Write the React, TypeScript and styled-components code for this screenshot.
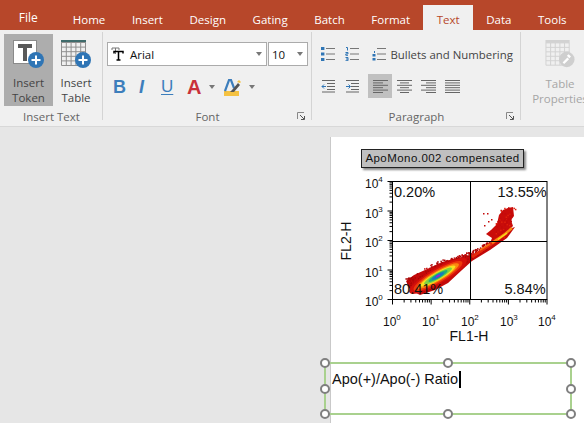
import React, { useMemo } from 'react';
import styled, { createGlobalStyle } from 'styled-components';

const GlobalStyle = createGlobalStyle`
  html, body {
    margin: 0;
    padding: 0;
    width: 584px;
    height: 423px;
    overflow: hidden;
    background: #e6e6e6;
  }
`;

const Window = styled.div`
  width: 584px;
  height: 423px;
  display: flex;
  flex-direction: column;
  overflow: hidden;
  font-family: 'Open Sans', 'Noto Sans', sans-serif;
`;

const TabBar = styled.div`
  height: 30px;
  flex: none;
  display: flex;
  align-items: flex-end;
  background: #b7472a;
`;

const FileTab = styled.div`
  flex: none;
  width: 59.5px;
  height: 25px;
  padding-right: 3px;
  box-sizing: border-box;
  text-align: center;
  line-height: 26px;
  font-size: 12px;
  color: #fff;
`;

const Tab = styled.div<{ $active?: boolean }>`
  flex: none;
  height: 25px;
  padding: 0 13.3px;
  line-height: 30px;
  font-size: 11.5px;
  white-space: nowrap;
  color: ${(p) => (p.$active ? '#b7472a' : '#fff')};
  background: ${(p) => (p.$active ? '#f0f0f0' : 'transparent')};
`;

const Ribbon = styled.div`
  height: 96px;
  flex: none;
  display: flex;
  background: #f0f0f0;
  border-bottom: 1px solid #d8d8d8;
`;

const Group = styled.div<{ $width: number; $last?: boolean }>`
  position: relative;
  flex: none;
  width: ${(p) => p.$width}px;
  height: 92px;
  margin-top: 2px;
  box-sizing: border-box;
  display: flex;
  flex-direction: column;
  &::after {
    content: '';
    display: ${(p) => (p.$last ? 'none' : 'block')};
    position: absolute;
    right: 0;
    top: 0;
    width: 1px;
    height: 88px;
    background: #d4d4d4;
  }
`;

const GroupBody = styled.div`
  flex: 1;
  min-height: 0;
`;

const GroupLabel = styled.div`
  height: 15px;
  line-height: 15px;
  text-align: center;
  font-size: 11.5px;
  color: #666;
`;

const Launcher = styled.svg`
  position: absolute;
  right: 7px;
  bottom: 4px;
  width: 8px;
  height: 8px;
`;

const BigButtons = styled.div`
  display: flex;
  padding: 2px 0 0 4px;
`;

const BigButton = styled.div<{ $active?: boolean; $width: number; $disabled?: boolean }>`
  width: ${(p) => p.$width}px;
  height: 72px;
  flex: none;
  display: flex;
  flex-direction: column;
  align-items: center;
  background: ${(p) => (p.$active ? '#adadad' : 'transparent')};
  color: ${(p) => (p.$disabled ? '#a6a6a6' : '#444')};
  svg {
    display: block;
    margin: 6px 0 5px;
  }
`;

const BigLabel = styled.div`
  font-size: 11.5px;
  line-height: 15px;
  text-align: center;
  white-space: nowrap;
`;

const FontRows = styled.div`
  padding: 10px 0 0 4px;
`;

const Combos = styled.div`
  display: flex;
  gap: 1px;
`;

const Combo = styled.div<{ $width: number }>`
  width: ${(p) => p.$width}px;
  height: 24px;
  box-sizing: border-box;
  display: flex;
  align-items: center;
  padding: 0 4px 0 3px;
  gap: 6px;
  background: #fff;
  border: 1px solid #ababab;
  font-size: 11.5px;
  color: #111;
`;

const ComboText = styled.span`
  flex: 1;
`;

const Caret = styled.span`
  flex: none;
  width: 0;
  height: 0;
  border-left: 3.5px solid transparent;
  border-right: 3.5px solid transparent;
  border-top: 4px solid #777;
`;

const FormatRow = styled.div`
  display: flex;
  align-items: center;
  height: 20px;
  margin-top: 11px;
  padding-left: 6px;
`;

const FormatLetter = styled.span<{ $color: string; $width: number; $italic?: boolean; $underline?: boolean; $size?: number }>`
  width: ${(p) => p.$width}px;
  flex: none;
  font-family: 'Liberation Sans', Arial, sans-serif;
  font-size: ${(p) => p.$size ?? 18}px;
  line-height: 20px;
  color: ${(p) => p.$color};
  font-style: ${(p) => (p.$italic ? 'italic' : 'normal')};
  text-decoration: ${(p) => (p.$underline ? 'underline' : 'none')};
  text-underline-offset: 2px;
  text-decoration-thickness: 1px;
  font-weight: ${(p) => (p.$underline ? 400 : 700)};
`;

const Spacer = styled.span<{ $width: number }>`
  flex: none;
  width: ${(p) => p.$width}px;
`;

const ParaRows = styled.div`
  display: flex;
  flex-direction: column;
  gap: 8px;
  padding: 10px 0 0 4px;
`;

const ParaRow = styled.div`
  display: flex;
  align-items: center;
  height: 24px;
`;

const ParaIcon = styled.div<{ $active?: boolean; $shift?: number }>`
  width: 24px;
  height: 24px;
  flex: none;
  margin-left: ${(p) => p.$shift ?? 0}px;
  display: flex;
  align-items: center;
  justify-content: center;
  background: ${(p) => (p.$active ? '#c0c0c0' : 'transparent')};
`;

const BulletsText = styled.span`
  font-size: 11.4px;
  color: #444;
  white-space: nowrap;
`;

const Workspace = styled.div`
  flex: 1;
  min-height: 0;
  display: flex;
  padding: 10px 0 0 330px;
  background: #e6e6e6;
`;

const Page = styled.div`
  width: 254px;
  box-sizing: border-box;
  border-left: 1px solid #c9c9c9;
  background: #fff;
  display: flex;
  flex-direction: column;
`;

const PlotTitle = styled.div`
  align-self: flex-start;
  margin: 12px 0 0 30px;
  width: 163px;
  height: 19px;
  box-sizing: border-box;
  text-align: center;
  line-height: 17px;
  background: #c0c0c0;
  border: 1px solid #222;
  box-shadow: 2px 2px 2px #8a8a8a;
  font-family: 'Liberation Sans', Arial, sans-serif;
  font-size: 11.5px;
  letter-spacing: 0.45px;
  color: #111;
  white-space: nowrap;
`;

const ChartSvg = styled.svg`
  display: block;
  flex: none;
  margin-top: 4px;
`;

const TextBox = styled.div`
  position: relative;
  flex: none;
  width: 248px;
  height: 53px;
  margin: 15px 0 0 -7px;
  box-sizing: border-box;
  border: 2px solid #a9d18e;
  padding: 7px 0 0 6px;
  font-family: 'Liberation Sans', Arial, sans-serif;
  font-size: 14.5px;
  line-height: 17px;
  color: #111;
  white-space: nowrap;
`;

const TextCaret = styled.span`
  display: inline-block;
  width: 2px;
  height: 17px;
  margin-left: 1px;
  background: #000;
  vertical-align: top;
`;

const Handle = styled.span<{ $x: number; $y: number }>`
  position: absolute;
  left: calc(${(p) => p.$x}% + ${(p) => p.$x / 50 - 1}px);
  top: calc(${(p) => p.$y}% + ${(p) => p.$y / 50 - 1}px);
  width: 10px;
  height: 10px;
  margin: -5px 0 0 -5px;
  box-sizing: border-box;
  border: 2px solid #7f7f7f;
  border-radius: 50%;
  background: #fff;
`;

const BLUE = '#3d7ebc';

const PlusBadge = ({ cx, cy }: { cx: number; cy: number }) => (
  <g>
    <circle cx={cx} cy={cy} r={8} fill="#2f75b5" />
    <path d={`M${cx - 4.5} ${cy}h9M${cx} ${cy - 4.5}v9`} stroke="#fff" strokeWidth={2} />
  </g>
);

const TokenIcon = () => (
  <svg width="32" height="30" viewBox="0 0 32 30">
    <rect x="0.5" y="0.5" width="23" height="23" fill="#fff" stroke="#8a8a8a" />
    <path d="M5 4h14v4h-5v13h-4V8H5z" fill="#595959" />
    <PlusBadge cx={23} cy={20} />
  </svg>
);

const gridLines = (x0: number, y0: number, w: number, h: number, cols: number, rows: number) => {
  let d = '';
  for (let i = 0; i <= cols; i += 1) d += `M${x0 + (i * w) / cols} ${y0}v${h}`;
  for (let i = 0; i <= rows; i += 1) d += `M${x0} ${y0 + (i * h) / rows}h${w}`;
  return d;
};

const TableIcon = () => (
  <svg width="32" height="30" viewBox="0 0 32 30">
    <rect x="1" y="0" width="25" height="2.5" fill="#3f6b6b" />
    <path d={gridLines(1.5, 2.5, 24, 23, 5, 5)} stroke="#8f8f8f" fill="none" />
    <PlusBadge cx={23} cy={20} />
  </svg>
);

const TablePropsIcon = () => (
  <svg width="32" height="32" viewBox="0 0 32 32">
    <rect x="1" y="0" width="25" height="3" fill="#d2d2d2" />
    <path d={gridLines(1.5, 3, 24, 23, 5, 5)} stroke="#d2d2d2" fill="none" />
    <circle cx="23" cy="20" r="8" fill="#cfcfcf" />
    <path d="M19.5 24l5-5M24 15.5l2.5 2.5" stroke="#fff" strokeWidth={2.4} />
  </svg>
);

const FontGlyph = () => (
  <svg width="13" height="14" viewBox="0 0 13 14">
    <path d="M1 3V1h7v2M4.5 1v6" stroke="#777" fill="none" />
    <path d="M3 6.5V4.6h9v1.9M7.5 4.5v8.5M5.5 13h4" stroke="#000" strokeWidth={1.5} fill="none" />
  </svg>
);

const HighlightGlyph = () => (
  <svg width="17" height="19" viewBox="0 0 17 19">
    <rect x="0" y="13" width="15" height="5" fill="#f5c242" />
    <path d="M1 13L5 2h2l3 8" stroke={BLUE} strokeWidth={2.2} fill="none" />
    <path d="M6 14l2-2 6-7 2 2-6 7z" fill="#555" />
    <path d="M13 4l2-2 2 2-1 1z" fill="#f5c242" />
  </svg>
);

const AlignIcon = ({ rows }: { rows: [number, number][] }) => (
  <svg width="15" height="15" viewBox="0 0 15 15">
    {rows.map(([x, w], i) => (
      <path key={i} d={`M${x} ${1.5 + i * 2.4}h${w}`} stroke="#666" strokeWidth={1} />
    ))}
  </svg>
);

const IndentIcon = ({ flip }: { flip?: boolean }) => (
  <svg width="15" height="14" viewBox="0 0 15 14">
    <path d="M1 1.5h13M6 4.5h8M6 7.5h8M6 10.5h8M1 13h13" stroke="#666" />
    {flip ? (
      <path d="M1 7.5h4M3.5 5.5l2 2-2 2" stroke="#2f75b5" fill="none" />
    ) : (
      <path d="M5 7.5H1M3 5.5l-2 2 2 2" stroke="#2f75b5" fill="none" />
    )}
  </svg>
);

const ListIcon = ({ kind }: { kind: 'dots' | 'nums' | 'mixed' }) => (
  <svg width="14" height="14" viewBox="0 0 14 14">
    <path d="M5 1.5h9M5 7h9M5 12.5h9" stroke="#777" />
    {kind === 'dots' &&
      [0, 5.5, 11].map((y) => <rect key={y} x="0" y={y} width="3.4" height="3" fill="#2f75b5" />)}
    {kind === 'nums' && <path d="M1 .5h1.5v3M.5 5.5h2.5v1.4H.8v1.4H3M.5 10.5H3v3.2H.5M1 12h2" stroke="#2f75b5" fill="none" />}
    {kind === 'mixed' && (
      <>
        <path d="M2.5 4v2" stroke="#2f75b5" />
        <rect x="0.5" y="7" width="3" height="2.5" fill="#2f75b5" />
        <rect x="0.5" y="11" width="3" height="2.5" fill="#2f75b5" />
      </>
    )}
  </svg>
);

const LauncherIcon = () => (
  <Launcher viewBox="0 0 8 8">
    <path d="M.5 7V.5H7" stroke="#888" fill="none" />
    <path d="M3 3l4 4M7.5 4v3.5H4" stroke="#555" fill="none" />
  </Launcher>
);

/* chart geometry, in window pixels */
const X0 = 392.5;
const X1 = 547;
const Y0 = 299.5;
const Y1 = 181.5;
const DX = (X1 - X0) / 4;
const DY = (Y0 - Y1) / 4;
const MINOR = [2, 3, 4, 5, 6, 7, 8, 9].map((n) => Math.log10(n));

const BAND: [number, number, number][] = [
  [406, 281, 3],
  [420, 283, 9],
  [440, 271, 10],
  [458, 261, 5],
  [472, 254, 3],
  [490, 243, 2],
];

const OUTLIERS = [
  [483, 213],
  [487, 213],
  [484, 225],
  [488, 221],
  [491, 219],
];

const useSpeckle = () =>
  useMemo(() => {
    let seed = 4711;
    const rnd = () => {
      seed = (seed * 16807) % 2147483647;
      return seed / 2147483647;
    };
    const dots: { x: number; y: number; c: string }[] = [];
    for (let i = 0; i < 420; i += 1) {
      const t = rnd() * (BAND.length - 1);
      const k = Math.floor(t);
      const f = t - k;
      const a = BAND[k];
      const b = BAND[k + 1];
      const off = (rnd() * 2 - 1) * (a[2] + (b[2] - a[2]) * f) * 1.15;
      dots.push({
        x: a[0] + (b[0] - a[0]) * f + off * 0.5,
        y: a[1] + (b[1] - a[1]) * f + off * 0.87,
        c: rnd() > 0.5 ? '#c40a0a' : '#a80606',
      });
    }
    for (let i = 0; i < 70; i += 1) {
      const y = 207 + rnd() * 32;
      dots.push({
        x: 489 + (240 - y) * 0.36 + rnd() * 15,
        y,
        c: rnd() > 0.5 ? '#c40a0a' : '#e0200c',
      });
    }
    OUTLIERS.forEach(([x, y]) => dots.push({ x, y, c: '#c40a0a' }));
    return dots;
  }, []);

const ellipses: [number, number, string][] = [
  [33, 8, '#d40f0a'],
  [28, 6.4, '#ee3a0c'],
  [24, 5, '#fb8a10'],
  [20, 4, '#f6e21e'],
  [16, 3.2, '#7fd040'],
  [11, 2.4, '#1fae78'],
  [7, 1.7, '#1878c0'],
  [2.5, 1, '#9a20d0'],
];

const Sup = ({ x, y, n }: { x: number; y: number; n: number }) => (
  <text x={x} y={y} fontSize={12}>
    10
    <tspan dy={-6} fontSize={8}>
      {n}
    </tspan>
  </text>
);

const Chart = () => {
  const dots = useSpeckle();
  let ticks = '';
  for (let d = 0; d <= 4; d += 1) {
    ticks += `M${X0 + d * DX} ${Y0}v5M${X0 - 5} ${Y0 - d * DY}h5`;
    if (d < 4) {
      MINOR.forEach((m) => {
        ticks += `M${X0 + (d + m) * DX} ${Y0}v3M${X0 - 3} ${Y0 - (d + m) * DY}h3`;
      });
    }
  }
  return (
    <ChartSvg
      width={253}
      height={175}
      viewBox="331 172 253 175"
      fontFamily="'Liberation Sans', Arial, sans-serif"
      fill="#111"
    >
      <path
        d="M406 281L414 275L425 270L442 262L457 258L472 255L488 245L500 238L512 228L515 227L507 238L490 250L472 261L462 270L448 283L435 290L420 295L410 290Z"
        fill="#c40a0a"
      />
      <path
        d="M503 210L508 208L513 207L514 216L511 220L513 226L503 236L497 241L490 243L492 238L486 234L491 230L497 224L499 215Z"
        fill="#c90c0a"
      />
      {dots.map((d, i) => (
        <rect key={i} x={d.x} y={d.y} width={1.5} height={1.5} fill={d.c} />
      ))}
      <path d="M472 257L490 245L507 233" stroke="#e4280c" strokeWidth={3} fill="none" />
      <path d="M492 243L505 234L512 228" stroke="#fa8a10" strokeWidth={2.4} fill="none" />
      <path d="M498 239.5L507 233" stroke="#f6e21e" strokeWidth={1.3} fill="none" />
      <path d="M480 250L490 244" stroke="#f86c10" strokeWidth={1.6} fill="none" />
      <g transform="rotate(-30 438 276)">
        {ellipses.map(([rx, ry, c]) => (
          <ellipse key={c} cx={438} cy={276} rx={rx} ry={ry} fill={c} />
        ))}
      </g>
      <rect x={X0} y={Y1} width={X1 - X0} height={Y0 - Y1} fill="none" stroke="#000" />
      <path d={`M470.5 ${Y1}V${Y0}M${X0} 241.5H${X1}`} stroke="#000" fill="none" />
      <path d={ticks} stroke="#000" fill="none" />
      <g fontSize={14.5}>
        <text x={394} y={197}>0.20%</text>
        <text x={497.5} y={197}>13.55%</text>
        <text x={394} y={294}>80.41%</text>
        <text x={504.5} y={294}>5.84%</text>
      </g>
      {[0, 1, 2, 3].map((n) => (
        <Sup key={n} x={383 + n * 39} y={326} n={n} />
      ))}
      <Sup x={538} y={326} n={4} />
      {[
        [4, 188],
        [3, 218],
        [2, 247],
        [1, 277],
        [0, 306],
      ].map(([n, y]) => (
        <Sup key={n} x={365} y={y} n={n} />
      ))}
      <text x={469} y={341} fontSize={14} textAnchor="middle">FL1-H</text>
      <text x={0} y={0} fontSize={14} textAnchor="middle" transform="translate(351 241) rotate(-90)">FL2-H</text>
    </ChartSvg>
  );
};

const HANDLES: [number, number][] = [
  [0, 0],
  [50, 0],
  [100, 0],
  [0, 50],
  [100, 50],
  [0, 100],
  [50, 100],
  [100, 100],
];

const tabs = ['Home', 'Insert', 'Design', 'Gating', 'Batch', 'Format', 'Text', 'Data', 'Tools'];

const App = () => (
  <Window>
    <GlobalStyle />
    <TabBar>
      <FileTab>File</FileTab>
      {tabs.map((t) => (
        <Tab key={t} $active={t === 'Text'}>
          {t}
        </Tab>
      ))}
    </TabBar>
    <Ribbon>
      <Group $width={103}>
        <GroupBody>
          <BigButtons>
            <BigButton $active $width={49}>
              <TokenIcon />
              <BigLabel>Insert<br />Token</BigLabel>
            </BigButton>
            <BigButton $width={46}>
              <TableIcon />
              <BigLabel>Insert<br />Table</BigLabel>
            </BigButton>
          </BigButtons>
        </GroupBody>
        <GroupLabel>Insert Text</GroupLabel>
      </Group>
      <Group $width={209}>
        <GroupBody>
          <FontRows>
            <Combos>
              <Combo $width={160}>
                <FontGlyph />
                <ComboText>Arial</ComboText>
                <Caret />
              </Combo>
              <Combo $width={40}>
                <ComboText>10</ComboText>
                <Caret />
              </Combo>
            </Combos>
            <FormatRow>
              <FormatLetter $color={BLUE} $width={26}>B</FormatLetter>
              <FormatLetter $color={BLUE} $width={22} $italic>I</FormatLetter>
              <FormatLetter $color={BLUE} $width={26} $underline $size={17}>U</FormatLetter>
              <FormatLetter $color="#c9303a" $width={22} $size={20}>A</FormatLetter>
              <Caret />
              <Spacer $width={9} />
              <HighlightGlyph />
              <Spacer $width={8} />
              <Caret />
            </FormatRow>
          </FontRows>
        </GroupBody>
        <GroupLabel>Font</GroupLabel>
        <LauncherIcon />
      </Group>
      <Group $width={209}>
        <GroupBody>
          <ParaRows>
            <ParaRow>
              <ParaIcon><ListIcon kind="dots" /></ParaIcon>
              <ParaIcon><ListIcon kind="nums" /></ParaIcon>
              <ParaIcon $shift={2.5}><ListIcon kind="mixed" /></ParaIcon>
              <BulletsText>Bullets and Numbering</BulletsText>
            </ParaRow>
            <ParaRow>
              <ParaIcon><IndentIcon /></ParaIcon>
              <ParaIcon><IndentIcon flip /></ParaIcon>
              <ParaIcon $active $shift={4}>
                <AlignIcon rows={[[0, 15], [0, 10], [0, 15], [0, 10], [0, 15], [0, 10]]} />
              </ParaIcon>
              <ParaIcon>
                <AlignIcon rows={[[0, 15], [3, 9], [0, 15], [3, 9], [0, 15], [3, 9]]} />
              </ParaIcon>
              <ParaIcon>
                <AlignIcon rows={[[0, 15], [5, 10], [0, 15], [5, 10], [0, 15], [5, 10]]} />
              </ParaIcon>
              <ParaIcon>
                <AlignIcon rows={[[0, 15], [0, 15], [0, 15], [0, 15], [0, 15], [0, 15]]} />
              </ParaIcon>
            </ParaRow>
          </ParaRows>
        </GroupBody>
        <GroupLabel>Paragraph</GroupLabel>
        <LauncherIcon />
      </Group>
      <Group $width={63} $last>
        <GroupBody>
          <BigButtons>
            <BigButton $width={70} $disabled>
              <TablePropsIcon />
              <BigLabel>Table<br />Properties</BigLabel>
            </BigButton>
          </BigButtons>
        </GroupBody>
      </Group>
    </Ribbon>
    <Workspace>
      <Page>
        <PlotTitle>ApoMono.002 compensated</PlotTitle>
        <Chart />
        <TextBox>
          Apo(+)/Apo(-) Ratio
          <TextCaret />
          {HANDLES.map(([x, y]) => (
            <Handle key={`${x}-${y}`} $x={x} $y={y} />
          ))}
        </TextBox>
      </Page>
    </Workspace>
  </Window>
);

export default App;
